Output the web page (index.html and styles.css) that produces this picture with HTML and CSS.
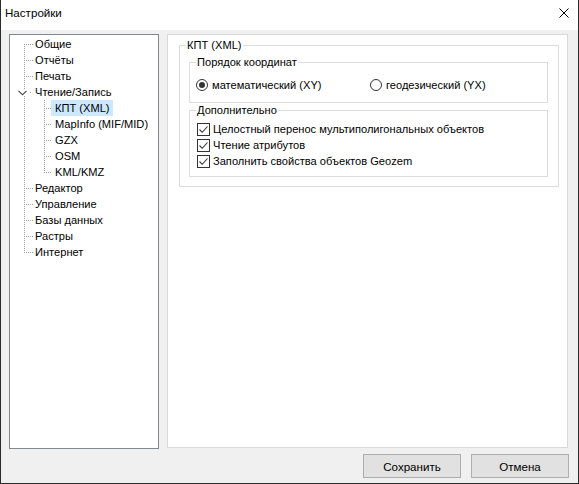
FILE: index.html
```html
<!DOCTYPE html>
<html lang="ru">
<head>
<meta charset="utf-8">
<title>Настройки</title>
<link rel="stylesheet" href="styles.css">
</head>
<body>
<div class="window">
  <div class="titlebar">
    <span class="title">Настройки</span>
    <svg class="close" width="10" height="10" viewBox="0 0 10 10"><path d="M0.5 0.5 L9.5 9.5 M9.5 0.5 L0.5 9.5" stroke="#000" stroke-width="1" fill="none"/></svg>
  </div>
  <div class="client">
    <div class="main">
      <div class="tree">
        <div class="rows">
          <div class="row">Общие</div>
          <div class="row">Отчёты</div>
          <div class="row">Печать</div>
          <div class="row open">
            <svg class="chev" width="9" height="6" viewBox="0 0 9 6"><path d="M0.5 0.8 L4.5 4.8 L8.5 0.8" stroke="#404040" stroke-width="1.1" fill="none"/></svg>Чтение/Запись
          </div>
          <div class="kids">
            <div class="row child"><span class="label selected">КПТ (XML)</span></div>
            <div class="row child"><span class="label">MapInfo (MIF/MID)</span></div>
            <div class="row child"><span class="label">GZX</span></div>
            <div class="row child"><span class="label">OSM</span></div>
            <div class="row child"><span class="label">KML/KMZ</span></div>
          </div>
          <div class="row">Редактор</div>
          <div class="row">Управление</div>
          <div class="row">Базы данных</div>
          <div class="row">Растры</div>
          <div class="row">Интернет</div>
        </div>
      </div>
      <div class="page">
        <fieldset class="group outer">
          <legend>КПТ (XML)</legend>
          <fieldset class="group inner coords">
            <legend>Порядок координат</legend>
            <div class="radios">
              <div class="opt"><span class="radio checked"></span>математический (XY)</div>
              <div class="opt"><span class="radio"></span>геодезический (YX)</div>
            </div>
          </fieldset>
          <fieldset class="group inner extra">
            <legend>Дополнительно</legend>
            <div class="opt"><span class="check"><svg width="11" height="11" viewBox="0 0 11 11"><path d="M1.5 5.5 L4.2 8.3 L9.5 2.5" stroke="#333" stroke-width="1.1" fill="none"/></svg></span>Целостный перенос мультиполигональных объектов</div>
            <div class="opt"><span class="check"><svg width="11" height="11" viewBox="0 0 11 11"><path d="M1.5 5.5 L4.2 8.3 L9.5 2.5" stroke="#333" stroke-width="1.1" fill="none"/></svg></span>Чтение атрибутов</div>
            <div class="opt"><span class="check"><svg width="11" height="11" viewBox="0 0 11 11"><path d="M1.5 5.5 L4.2 8.3 L9.5 2.5" stroke="#333" stroke-width="1.1" fill="none"/></svg></span>Заполнить свойства объектов Geozem</div>
          </fieldset>
        </fieldset>
      </div>
    </div>
    <div class="footer">
      <button class="btn">Сохранить</button>
      <button class="btn">Отмена</button>
    </div>
  </div>
</div>
</body>
</html>
```

FILE: styles.css
```css
* { box-sizing: border-box; }
html, body { margin: 0; padding: 0; background: #f0f0f0; }
body {
  font-family: "Liberation Sans", Arial, sans-serif;
  font-size: 11.1px;
  color: #000;
}
.window {
  width: 579px;
  height: 484px;
  border: 1px solid #2b2b2b;
  border-top: none;
  background: #f0f0f0;
  display: flex;
  flex-direction: column;
}
.titlebar {
  height: 30px;
  background: #fff;
  display: flex;
  align-items: flex-start;
  justify-content: space-between;
  padding: 5px 9px 0 4px;
  line-height: 16px;
  font-size: 11.6px;
  flex: none;
}
.close { margin-top: 3px; }
.client {
  flex: 1;
  display: flex;
  flex-direction: column;
  padding: 4px 10px 5px 8px;
}
.main {
  display: flex;
  gap: 8px;
  height: 415px;
}
.tree {
  width: 150px;
  height: 415px;
  border: 1px solid #828790;
  background: #fff;
  padding-top: 1px;
}
.rows { position: relative; }
.rows::before {
  content: "";
  position: absolute;
  left: 14px;
  top: 8px;
  bottom: 8px;
  width: 1px;
  background: repeating-linear-gradient(to bottom, #a0a0a0 0 1px, transparent 1px 2px);
}
.row {
  position: relative;
  height: 16px;
  line-height: 16px;
  padding-left: 25px;
  white-space: nowrap;
}
.row::before {
  content: "";
  position: absolute;
  left: 14px;
  top: 8px;
  width: 9px;
  height: 1px;
  background: repeating-linear-gradient(to right, #a0a0a0 0 1px, transparent 1px 2px);
}
.row.open::before { left: 20px; width: 1px; }
.chev {
  position: absolute;
  left: 8px;
  top: 6px;
  background: #fff;
}
.kids { position: relative; }
.kids::before {
  content: "";
  position: absolute;
  left: 34px;
  top: 0;
  bottom: 8px;
  width: 1px;
  background: repeating-linear-gradient(to bottom, #a0a0a0 0 1px, transparent 1px 2px);
}
.row.child { padding-left: 41px; }
.row.child::before { left: 34px; width: 7px; }
.label {
  display: inline-block;
  height: 16px;
  padding: 0 3px 0 4px;
}
.label.selected { background: #cce8ff; }
.page {
  width: 401px;
  height: 414px;
  border: 1px solid #d9d9d9;
  background: #fff;
}
.group {
  border: 1px solid #dcdcdc;
  margin: 0;
  min-width: 0;
}
.group legend {
  line-height: 14px;
  padding: 0 1px;
}
.outer {
  margin: 3px 8px 0 11px;
  padding: 3px 10px 9px 9px;
}
.outer > legend { margin-left: -3px; }
.coords {
  padding: 8px 6px 9px 6px;
}
.coords > legend { margin-left: 0; }
.extra {
  padding: 4px 6px 7px 7px;
}
.extra > legend { margin-left: -1px; }
.radios {
  display: grid;
  grid-template-columns: 174px auto;
}
.opt {
  display: flex;
  align-items: center;
  height: 16px;
  line-height: 16px;
  white-space: nowrap;
}
.radio {
  width: 12px;
  height: 12px;
  border: 1px solid #333;
  border-radius: 50%;
  background: #fff;
  margin-right: 4px;
  display: inline-flex;
  align-items: center;
  justify-content: center;
  flex: none;
}
.radio.checked::after {
  content: "";
  width: 6px;
  height: 6px;
  border-radius: 50%;
  background: #333;
}
.check {
  width: 13px;
  height: 13px;
  border: 1px solid #333;
  background: #fff;
  margin-right: 3px;
  display: inline-flex;
  align-items: center;
  justify-content: center;
  flex: none;
}
.check svg { display: block; }
.footer {
  display: flex;
  justify-content: flex-end;
  gap: 10px;
  margin-top: 5px;
  margin-right: -1px;
}
.btn {
  width: 98px;
  height: 24px;
  border: 1px solid #adadad;
  background: #e1e1e1;
  font-family: inherit;
  font-size: 11.6px;
  color: #000;
  padding: 0;
  margin: 0;
}
```
